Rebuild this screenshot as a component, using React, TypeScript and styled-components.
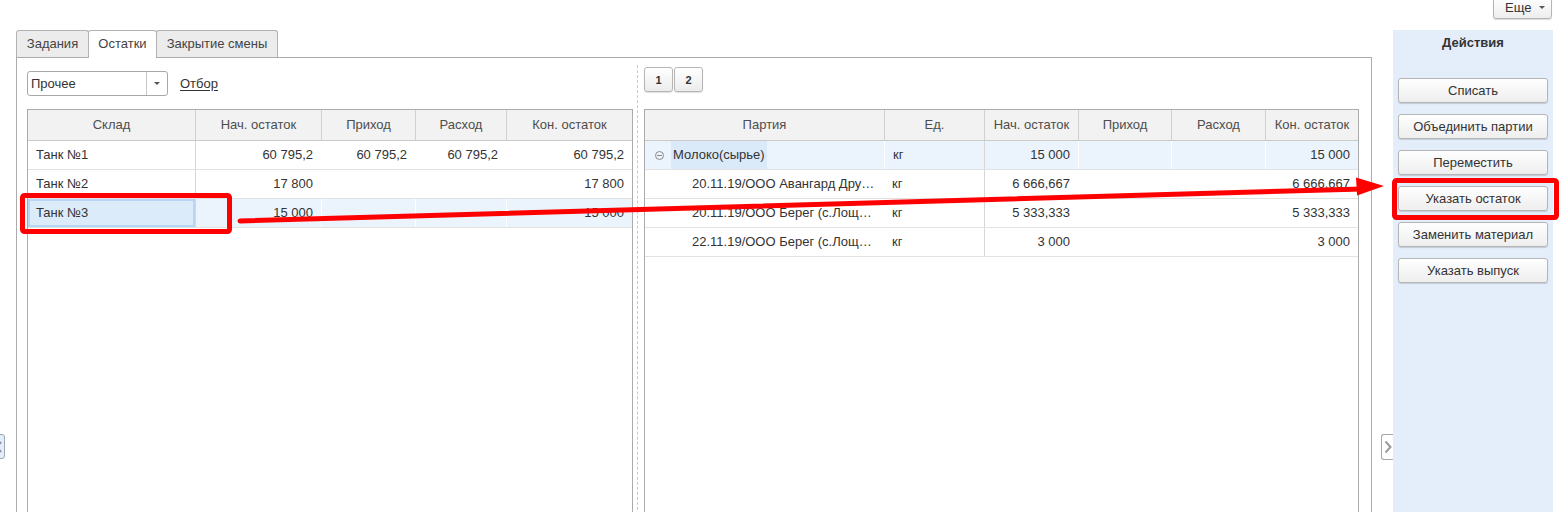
import React from 'react';
import styled, { createGlobalStyle } from 'styled-components';

const GlobalStyle = createGlobalStyle`
  html, body { margin: 0; padding: 0; background: #fff; }
  body { font-family: "Liberation Sans", Arial, sans-serif; font-size: 13px; color: #333; }
  * { box-sizing: border-box; }
`;

const Page = styled.div`
  position: relative;
  width: 1562px;
  height: 512px;
  overflow: hidden;
  background: #fff;
`;

const TopBar = styled.div`
  height: 30px;
  display: flex;
  justify-content: flex-end;
  align-items: flex-start;
  padding-right: 10px;
`;

const MoreButton = styled.div`
  margin-top: -4px;
  width: 59px;
  height: 23px;
  border: 1px solid #b5b5b5;
  border-radius: 3px;
  background: linear-gradient(#ffffff, #eeeeee);
  box-shadow: 0 1px 1px rgba(0, 0, 0, 0.15);
  display: flex;
  align-items: center;
  justify-content: space-between;
  padding: 0 6px 0 11px;
  color: #333;
`;

const Caret = styled.span`
  width: 0;
  height: 0;
  border-left: 3px solid transparent;
  border-right: 3px solid transparent;
  border-top: 3px solid #555;
`;

const Workspace = styled.div`
  display: flex;
  height: 500px;
`;

const Gutter = styled.div<{ $w: number; $end?: boolean }>`
  width: ${p => p.$w}px;
  flex: none;
  padding-top: 404px;
  display: flex;
  justify-content: ${p => (p.$end ? 'flex-end' : 'flex-start')};
  align-items: flex-start;
`;

const CollapseLeft = styled.div`
  margin-left: -7px;
  width: 12px;
  height: 25px;
  border: 1px solid #9aa8b8;
  border-radius: 3px;
  background: #e4eefb;
  display: flex;
  align-items: center;
  justify-content: center;
`;

const CollapseRight = styled.div`
  width: 12px;
  height: 26px;
  border: 1px solid #a8a8a8;
  border-right: none;
  border-radius: 3px 0 0 3px;
  background: #fff;
  display: flex;
  align-items: center;
  justify-content: center;
`;

const MainColumn = styled.div`
  width: 1356px;
  flex: none;
  display: flex;
  flex-direction: column;
`;

const Tabs = styled.div`
  display: flex;
  height: 27px;
  align-items: flex-start;
`;

const Tab = styled.div<{ $active?: boolean; $w: number }>`
  position: relative;
  z-index: ${p => (p.$active ? 1 : 0)};
  width: ${p => p.$w}px;
  height: ${p => (p.$active ? 28 : 27)}px;
  margin-left: -1px;
  &:first-child { margin-left: 0; }
  text-align: center;
  line-height: 26px;
  border: 1px solid #b2b2b2;
  border-bottom: none;
  border-radius: 3px 3px 0 0;
  background: ${p => (p.$active ? '#ffffff' : '#ececec')};
  color: #444;
  white-space: nowrap;
`;

const Panel = styled.div`
  flex: 1;
  border: 1px solid #ababab;
  border-bottom: none;
  display: flex;
  padding: 0 12px 0 10px;
  min-height: 0;
`;

const LeftCol = styled.div`
  width: 606px;
  flex: none;
  padding-top: 13px;
  display: flex;
  flex-direction: column;
`;

const RightCol = styled.div`
  width: 715px;
  flex: none;
  padding-top: 9px;
  display: flex;
  flex-direction: column;
`;

const Divider = styled.div`
  width: 1px;
  flex: none;
  margin: 7px 6px 0 4px;
  border-left: 1px dashed #c8c8c8;
`;

const FilterRow = styled.div`
  height: 25px;
  display: flex;
  align-items: center;
`;

const Select = styled.div`
  width: 141px;
  height: 25px;
  border: 1px solid #a8a8a8;
  border-radius: 3px;
  background: #fff;
  display: flex;
  align-items: stretch;
`;

const SelectValue = styled.div`
  flex: 1;
  padding-left: 3px;
  line-height: 23px;
  color: #333;
`;

const SelectArrow = styled.div`
  width: 21px;
  border-left: 1px solid #c8c8c8;
  display: flex;
  align-items: center;
  justify-content: center;
`;

const LinkText = styled.span`
  margin-left: 12px;
  color: #333;
  text-decoration: underline;
  text-underline-offset: 2px;
`;

const Pager = styled.div`
  height: 25px;
  display: flex;
  gap: 1px;
`;

const PageButton = styled.div`
  width: 29px;
  height: 25px;
  border: 1px solid #b5b5b5;
  border-radius: 3px;
  background: linear-gradient(#ffffff, #ececec);
  box-shadow: 0 1px 1px rgba(0, 0, 0, 0.12);
  font-size: 11px;
  font-weight: bold;
  color: #333;
  display: flex;
  align-items: center;
  justify-content: center;
`;

const Table = styled.div<{ $gap: number }>`
  margin-top: ${p => p.$gap}px;
  flex: 1;
  border: 1px solid #ababab;
  border-bottom: none;
  background: #fff;
`;

const HeadRow = styled.div<{ $cols: string }>`
  display: grid;
  grid-template-columns: ${p => p.$cols};
  height: 31px;
  background: #f2f2f2;
  border-bottom: 1px solid #cacaca;
`;

const HeadCell = styled.div<{ $first?: boolean }>`
  border-left: ${p => (p.$first ? 'none' : '1px solid #d0d0d0')};
  text-align: center;
  line-height: 30px;
  color: #4d4d4d;
  white-space: nowrap;
  overflow: hidden;
`;

const Row = styled.div<{ $cols: string; $hl?: boolean }>`
  display: grid;
  grid-template-columns: ${p => p.$cols};
  height: 29px;
  border-bottom: 1px solid #e2e2e2;
  background: ${p => (p.$hl ? '#ebf3fc' : 'transparent')};
`;

const Cell = styled.div<{ $line: string | null; $right?: boolean; $padL?: number; $sel?: boolean }>`
  border-left: ${p => (p.$line ? `1px solid ${p.$line}` : 'none')};
  line-height: 28px;
  padding: 0 8px 0 ${p => p.$padL ?? 8}px;
  text-align: ${p => (p.$right ? 'right' : 'left')};
  white-space: nowrap;
  overflow: hidden;
  text-overflow: ellipsis;
  color: #333;
  background: ${p => (p.$sel ? '#dcebfa' : 'transparent')};
  box-shadow: ${p => (p.$sel ? 'inset 0 0 0 2px #b7d6f3' : 'none')};
`;

const TreeCell = styled.div`
  display: flex;
  align-items: center;
  padding-left: 10px;
  white-space: nowrap;
  overflow: hidden;
`;

const TreeToggle = styled.span`
  width: 9px;
  height: 9px;
  border: 1px solid #8a8a8a;
  border-radius: 50%;
  position: relative;
  flex: none;
  margin-right: 7px;
  &::after {
    content: '';
    position: absolute;
    left: 1px;
    right: 1px;
    top: 3px;
    height: 1px;
    background: #8a8a8a;
  }
`;

const NameChip = styled.span`
  background: #dbeaf9;
  padding: 0 2px;
  line-height: 28px;
  height: 28px;
  color: #333;
`;

const Sidebar = styled.div`
  width: 160px;
  flex: none;
  background: #e4eefb;
  padding: 0 5px;
  display: flex;
  flex-direction: column;
`;

const SideTitle = styled.div`
  height: 26px;
  line-height: 26px;
  text-align: center;
  font-weight: bold;
  color: #333;
  margin-bottom: 22px;
`;

const SideButtons = styled.div`
  display: flex;
  flex-direction: column;
  gap: 11px;
`;

const ActionButton = styled.div`
  height: 25px;
  border: 1px solid #b5b5b5;
  border-radius: 3px;
  background: linear-gradient(#ffffff, #eeeeee);
  box-shadow: 0 1px 1px rgba(0, 0, 0, 0.15);
  text-align: center;
  line-height: 23px;
  color: #333;
  white-space: nowrap;
`;

const RightMargin = styled.div`
  width: 9px;
  flex: none;
`;

const Overlay = styled.svg`
  position: absolute;
  left: 0;
  top: 0;
  pointer-events: none;
  z-index: 10;
`;

const LEFT_COLS = '167px 126px 94px 91px 126px';
const RIGHT_COLS = '239px 100px 94px 93px 94px 93px';

type LeftRow = { name: string; v: string[]; hl?: boolean };
const leftRows: LeftRow[] = [
  { name: 'Танк №1', v: ['60 795,2', '60 795,2', '60 795,2', '60 795,2'] },
  { name: 'Танк №2', v: ['17 800', '', '', '17 800'] },
  { name: 'Танк №3', v: ['15 000', '', '', '15 000'], hl: true },
];

type RightRow = { name: string; unit: string; v: string[] };
const childRows: RightRow[] = [
  { name: '20.11.19/ООО Авангард Дру…', unit: 'кг', v: ['6 666,667', '', '', '6 666,667'] },
  { name: '20.11.19/ООО Берег (с.Лощ…', unit: 'кг', v: ['5 333,333', '', '', '5 333,333'] },
  { name: '22.11.19/ООО Берег (с.Лощ…', unit: 'кг', v: ['3 000', '', '', '3 000'] },
];

const actions = ['Списать', 'Объединить партии', 'Переместить', 'Указать остаток', 'Заменить материал', 'Указать выпуск'];

export default function App() {
  return (
    <Page>
      <GlobalStyle />
      <TopBar>
        <MoreButton>
          <span>Еще</span>
          <Caret />
        </MoreButton>
      </TopBar>
      <Workspace>
        <Gutter $w={16}>
          <CollapseLeft>
            <svg width="8" height="12" viewBox="0 0 8 12">
              <path d="M6 1 L2 6 L6 11" fill="none" stroke="#8a8a8a" strokeWidth="2" />
            </svg>
          </CollapseLeft>
        </Gutter>
        <MainColumn>
          <Tabs>
            <Tab $w={73}>Задания</Tab>
            <Tab $w={69} $active>Остатки</Tab>
            <Tab $w={122}>Закрытие смены</Tab>
          </Tabs>
          <Panel>
            <LeftCol>
              <FilterRow>
                <Select>
                  <SelectValue>Прочее</SelectValue>
                  <SelectArrow>
                    <Caret />
                  </SelectArrow>
                </Select>
                <LinkText>Отбор</LinkText>
              </FilterRow>
              <Table $gap={13}>
                <HeadRow $cols={LEFT_COLS}>
                  <HeadCell $first>Склад</HeadCell>
                  <HeadCell>Нач. остаток</HeadCell>
                  <HeadCell>Приход</HeadCell>
                  <HeadCell>Расход</HeadCell>
                  <HeadCell>Кон. остаток</HeadCell>
                </HeadRow>
                {leftRows.map(r => (
                  <Row key={r.name} $cols={LEFT_COLS} $hl={r.hl}>
                    <Cell $line={null} $sel={r.hl}>{r.name}</Cell>
                    {r.v.map((v, i) => (
                      <Cell key={i} $right $line={i === 0 ? '#d6d6d6' : r.hl ? '#ffffff' : null} $padL={i === 0 ? 8 : 9}>
                        {v}
                      </Cell>
                    ))}
                  </Row>
                ))}
              </Table>
            </LeftCol>
            <Divider />
            <RightCol>
              <Pager>
                <PageButton>1</PageButton>
                <PageButton>2</PageButton>
              </Pager>
              <Table $gap={17}>
                <HeadRow $cols={RIGHT_COLS}>
                  <HeadCell $first>Партия</HeadCell>
                  <HeadCell>Ед.</HeadCell>
                  <HeadCell>Нач. остаток</HeadCell>
                  <HeadCell>Приход</HeadCell>
                  <HeadCell>Расход</HeadCell>
                  <HeadCell>Кон. остаток</HeadCell>
                </HeadRow>
                <Row $cols={RIGHT_COLS} $hl>
                  <TreeCell>
                    <TreeToggle />
                    <NameChip>Молоко(сырье)</NameChip>
                  </TreeCell>
                  <Cell $line="#ffffff">кг</Cell>
                  <Cell $line="#d6d6d6" $right>15 000</Cell>
                  <Cell $line="#ffffff" $right></Cell>
                  <Cell $line="#ffffff" $right></Cell>
                  <Cell $line="#ffffff" $right>15 000</Cell>
                </Row>
                {childRows.map((r, idx) => (
                  <Row key={idx} $cols={RIGHT_COLS}>
                    <Cell $line={null} $padL={47}>{r.name}</Cell>
                    <Cell $line={null}>{r.unit}</Cell>
                    {r.v.map((v, i) => (
                      <Cell key={i} $right $line={i === 0 ? '#d6d6d6' : null}>
                        {v}
                      </Cell>
                    ))}
                  </Row>
                ))}
              </Table>
            </RightCol>
          </Panel>
        </MainColumn>
        <Gutter $w={21} $end>
          <CollapseRight>
            <svg width="8" height="14" viewBox="0 0 8 14">
              <path d="M1.5 1.5 L6.5 7 L1.5 12.5" fill="none" stroke="#9a9a9a" strokeWidth="2" />
            </svg>
          </CollapseRight>
        </Gutter>
        <Sidebar>
          <SideTitle>Действия</SideTitle>
          <SideButtons>
            {actions.map(a => (
              <ActionButton key={a}>{a}</ActionButton>
            ))}
          </SideButtons>
        </Sidebar>
        <RightMargin />
      </Workspace>
      <Overlay width="1562" height="512" viewBox="0 0 1562 512">
        <rect x="22.5" y="195.5" width="207" height="36" rx="2" fill="none" stroke="#ff0000" strokeWidth="5" />
        <rect x="1394.5" y="180.5" width="162" height="37" rx="2" fill="none" stroke="#ff0000" strokeWidth="5" />
        <line x1="240" y1="221" x2="1362" y2="189" stroke="#ff0000" strokeWidth="5" strokeLinecap="round" />
        <polygon points="1384,186 1356,177.5 1357,195.5" fill="#ff0000" />
      </Overlay>
    </Page>
  );
}
